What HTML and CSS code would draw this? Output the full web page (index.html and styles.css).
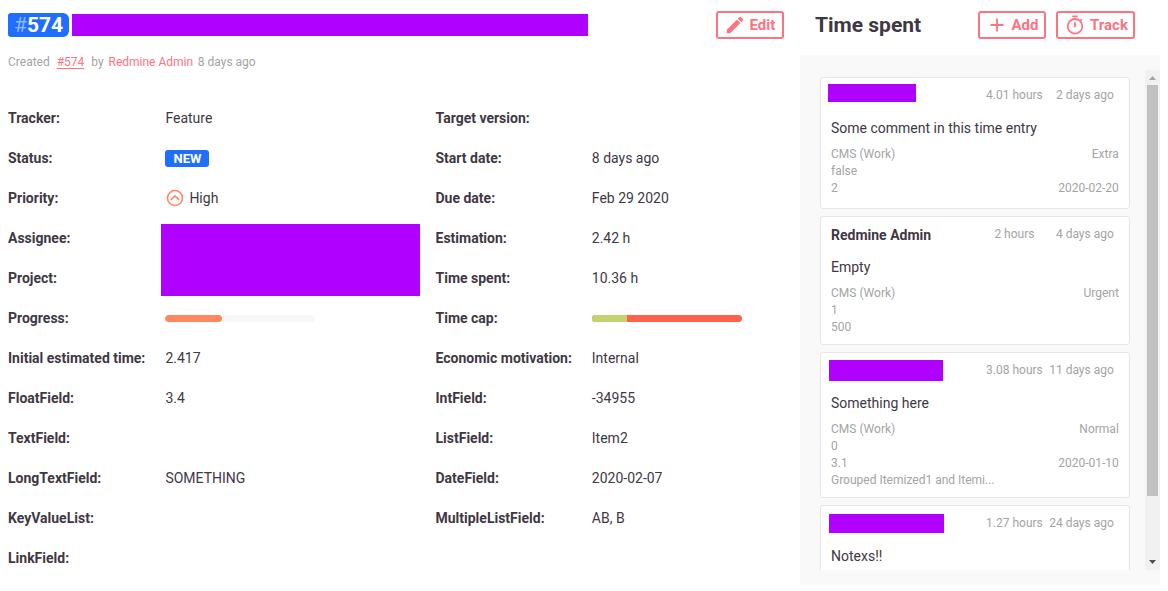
FILE: index.html
```html
<!DOCTYPE html>
<html lang="en">
<head>
<meta charset="utf-8">
<title>Issue #574</title>
<link rel="stylesheet" href="styles.css">
</head>
<body>
<div class="page">
  <main class="issue">
    <header class="issue-header">
      <span class="issue-id"><span class="hash">#</span>574</span>
      <span class="redacted redacted-title"></span>
      <button class="btn btn-edit"><svg class="icon" viewBox="0 0 24 24" width="22" height="22"><path fill="currentColor" d="M3 17.25V21h3.75L17.81 9.94l-3.75-3.75L3 17.25zM20.71 7.04a1 1 0 0 0 0-1.41l-2.34-2.34a1 1 0 0 0-1.41 0l-1.83 1.83 3.75 3.75 1.83-1.83z"/></svg><span>Edit</span></button>
    </header>
    <p class="created"><span>Created</span><a class="link-id">#574</a><span class="by">by</span><a class="author">Redmine Admin</a><span class="when">8 days ago</span></p>
    <div class="details">
      <dl class="fields fields-left">
        <dt>Tracker:</dt><dd>Feature</dd>
        <dt>Status:</dt><dd><span class="status">NEW</span></dd>
        <dt>Priority:</dt><dd><svg class="priority" viewBox="0 0 18 18" width="18" height="18"><g fill="none" stroke="#ff8860" stroke-width="1.6"><circle cx="9" cy="9" r="7.5"/><path d="M4.8 10.8L9 6.9l4.2 3.9"/></g></svg>High</dd>
        <dt>Assignee:</dt><dd class="people"><span class="redacted redacted-people"></span></dd>
        <dt>Project:</dt>
        <dt>Progress:</dt><dd><span class="bar"><span class="bar-done" style="width:38%"></span></span></dd>
        <dt>Initial estimated time:</dt><dd>2.417</dd>
        <dt>FloatField:</dt><dd>3.4</dd>
        <dt>TextField:</dt><dd></dd>
        <dt>LongTextField:</dt><dd>SOMETHING</dd>
        <dt>KeyValueList:</dt><dd></dd>
        <dt>LinkField:</dt><dd></dd>
      </dl>
      <dl class="fields fields-right">
        <dt>Target version:</dt><dd></dd>
        <dt>Start date:</dt><dd>8 days ago</dd>
        <dt>Due date:</dt><dd>Feb 29 2020</dd>
        <dt>Estimation:</dt><dd>2.42 h</dd>
        <dt>Time spent:</dt><dd>10.36 h</dd>
        <dt>Time cap:</dt><dd><span class="bar bar-over"><span class="bar-within" style="width:23.4%"></span></span></dd>
        <dt>Economic motivation:</dt><dd>Internal</dd>
        <dt>IntField:</dt><dd>-34955</dd>
        <dt>ListField:</dt><dd>Item2</dd>
        <dt>DateField:</dt><dd>2020-02-07</dd>
        <dt>MultipleListField:</dt><dd>AB, B</dd>
      </dl>
    </div>
  </main>
  <aside class="time">
    <header class="time-header">
      <h2>Time spent</h2>
      <button class="btn btn-add"><svg class="icon" viewBox="0 0 22 22" width="22" height="22"><path fill="none" stroke="currentColor" stroke-width="1.8" d="M11 4.5v13M4.5 11h13"/></svg><span>Add</span></button>
      <button class="btn btn-track"><svg class="icon" viewBox="0 0 22 22" width="22" height="22"><g fill="none" stroke="currentColor" stroke-width="1.8"><circle cx="11" cy="12.3" r="7.3"/><path d="M8.3 2.4h5.4M11 8.2v5M16.2 6.8l1.5-1.5"/></g></svg><span>Track</span></button>
    </header>
    <div class="panel">
      <div class="viewport">
        <div class="entries">
          <article class="entry entry-tall">
            <div class="entry-head"><span class="redacted r1"></span><span class="hours">4.01 hours</span><span class="ago">2 days ago</span></div>
            <p class="comment">Some comment in this time entry</p>
            <div class="meta"><span>CMS (Work)</span><span>Extra</span></div>
            <div class="meta"><span>false</span></div>
            <div class="meta"><span>2</span><span>2020-02-20</span></div>
          </article>
          <article class="entry">
            <div class="entry-head"><strong class="name">Redmine Admin</strong><span class="hours">2 hours</span><span class="ago">4 days ago</span></div>
            <p class="comment">Empty</p>
            <div class="meta"><span>CMS (Work)</span><span>Urgent</span></div>
            <div class="meta"><span>1</span></div>
            <div class="meta"><span>500</span></div>
          </article>
          <article class="entry">
            <div class="entry-head"><span class="redacted r3"></span><span class="hours">3.08 hours</span><span class="ago">11 days ago</span></div>
            <p class="comment">Something here</p>
            <div class="meta"><span>CMS (Work)</span><span>Normal</span></div>
            <div class="meta"><span>0</span></div>
            <div class="meta"><span>3.1</span><span>2020-01-10</span></div>
            <div class="meta"><span>Grouped Itemized1 and Itemi...</span></div>
          </article>
          <article class="entry">
            <div class="entry-head"><span class="redacted r4"></span><span class="hours">1.27 hours</span><span class="ago">24 days ago</span></div>
            <p class="comment">Notexs!!</p>
          </article>
        </div>
        <div class="scrollbar">
          <svg viewBox="0 0 15 15" width="15" height="15"><path fill="#a3a3a3" d="M4 10h7L7.5 6z"/></svg>
          <span class="thumb"></span>
          <svg class="down" viewBox="0 0 15 15" width="15" height="15"><path fill="#505050" d="M4 5h7L7.5 9z"/></svg>
        </div>
      </div>
    </div>
  </aside>
</div>
</body>
</html>
```
FILE: styles.css
```css
* { box-sizing: border-box; }
body, p, h2, dl, dd { margin: 0; }
body {
  background: #fff;
  color: #3f3844;
  font: 14px/20px Roboto, sans-serif;
  overflow: hidden;
}
.page { display: flex; height: 591px; }
.issue { width: 800px; padding: 11px 16px 0 8px; }
.redacted { display: block; background: #b000ff; flex: none; }

.issue-header { display: flex; height: 28px; align-items: center; }
.issue-id {
  width: 61px;
  height: 24px;
  margin-top: -1px;
  padding-left: 6px;
  border-radius: 3px 6px 6px 3px;
  background: #1f6eff;
  color: #fff;
  font-size: 21px;
  font-weight: 700;
  line-height: 24px;
}
.hash { color: #8fb7ff; font-weight: 400; }
.redacted-title { width: 516px; height: 22px; margin-left: 3px; }

.btn {
  display: flex;
  align-items: center;
  height: 28px;
  padding: 0;
  border: 2px solid #ff7280;
  border-radius: 3px;
  background: #fff;
  color: #ff7280;
  font: 700 15px/24px Roboto, sans-serif;
}
.icon { flex: none; }
.btn-edit { width: 68px; margin-left: auto; padding-left: 6px; gap: 3.5px; }
.btn-add { width: 68px; padding-left: 6px; gap: 3.5px; }
.btn-track { width: 79px; margin-left: 10px; padding-left: 6px; gap: 4px; }

.created { display: flex; margin-top: 13px; color: #a4a4a4; font-size: 12px; line-height: 20px; }
.created a { color: #ff7280; }
.link-id { margin-left: 7px; text-decoration: underline; text-underline-offset: 2px; }
.by { margin-left: 7px; }
.author { margin-left: 4.8px; }
.when { margin-left: 4.7px; }

.details { display: flex; margin-top: 26px; }
.fields { display: grid; grid-auto-rows: 40px; align-content: start; }
.fields-left { width: 427.5px; grid-template-columns: 157.4px 1fr; }
.fields-right { grid-template-columns: 156.3px 150px; }
.fields dt { grid-column: 1; font-weight: 700; line-height: 40px; white-space: nowrap; }
.fields dd { grid-column: 2; display: flex; align-items: center; line-height: 40px; }
.fields .people { grid-row: 4 / span 2; }
.fields-left dt:nth-of-type(5) { grid-row: 5; }
.redacted-people { width: 259px; height: 72px; margin: 4px 0 0 -4.4px; }
.status {
  width: 44px;
  height: 17px;
  border-radius: 3px;
  background: #1f6eff;
  color: #fff;
  font-size: 13px;
  font-weight: 700;
  line-height: 18px;
  text-align: center;
}
.priority { margin: 0 5.4px 0 .6px; }
.bar { width: 150px; height: 7px; border-radius: 4px; background: #f8f8f8; overflow: hidden; display: flex; }
.bar-done { background: #ff8860; border-radius: 4px; }
.bar-over { background: #ff614a; }
.bar-within { background: #c5d36f; }

.time { width: 360px; flex: none; padding-top: 11px; }
.time-header { display: flex; align-items: center; height: 28px; padding: 0 25px 0 15px; }
.time-header h2 { margin-right: auto; font-size: 21px; font-weight: 700; line-height: 28px; }
.panel { height: 530px; margin-top: 16px; padding: 15px 0 15px 20px; border-radius: 3px; background: #f9f9f9; }
.viewport { display: flex; height: 500px; overflow: hidden; }
.entries { width: 310px; padding-top: 7px; }
.entry {
  margin-bottom: 7px;
  padding: 0 10px 8px;
  border: 1px solid #e6e6e6;
  border-radius: 3px;
  background: #fff;
}
.entry-tall { padding-bottom: 11px; }
.entry-head {
  display: grid;
  grid-template-columns: 1fr 82px 58px;
  align-items: center;
  height: 34px;
  padding-right: 5.2px;
  color: #a4a4a4;
  font-size: 12px;
}
.hours { text-align: center; padding-right: .8px; }
.ago { justify-self: end; white-space: nowrap; }
.name { color: #3f3844; font-size: 14px; padding-top: 1px; }
.comment { padding: 6px 0 8px; }
.meta { display: flex; justify-content: space-between; padding-right: .2px; color: #a4a4a4; font-size: 12px; line-height: 17px; }
.r1 { width: 88px; height: 18px; margin: -4px 0 0 -3px; }
.r3 { width: 114px; height: 21px; margin-left: -2px; }
.r4 { width: 115px; height: 19px; margin-left: -2px; }
.entry:last-child { padding-bottom: 40px; }

.scrollbar { display: flex; flex-direction: column; width: 15px; margin-left: 15px; background: #f1f1f1; }
.scrollbar svg { flex: none; }
.thumb { width: 11px; height: 411px; margin-left: 2px; background: #c1c1c1; }
.down { margin-top: auto; }
```
